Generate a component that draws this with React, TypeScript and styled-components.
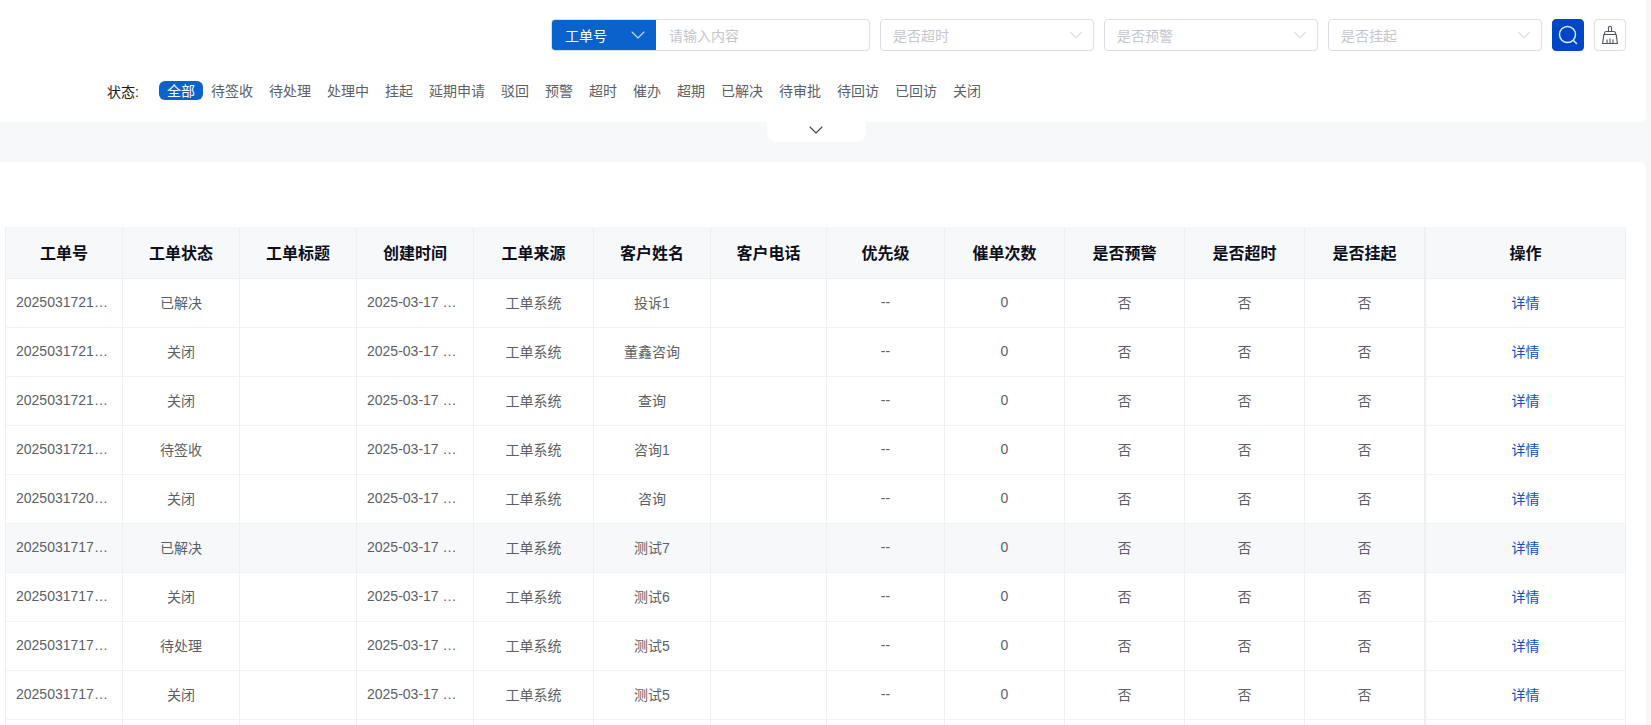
import styled, { createGlobalStyle } from "styled-components";
import { ChevronDown } from "lucide-react";

const GlobalStyle = createGlobalStyle`
    html, body {
        margin: 0;
        padding: 0;
        height: 725px;
        overflow: hidden;
        background: #f7f8fa;
        font-family: "Liberation Sans", "Noto Sans CJK SC", sans-serif;
        font-size: 14px;
    }
    * {
        box-sizing: border-box;
    }
`;

const Page = styled.div`
    height: 725px;
    padding-right: 5px;
    overflow: hidden;
`;

const FilterPanel = styled.section`
    height: 122px;
    padding: 19px 20px 0 107px;
    background: #fff;
    border-bottom-right-radius: 6px;
`;

const SearchBar = styled.div`
    display: flex;
    justify-content: flex-end;
    gap: 10px;
    height: 32px;
`;

const InputGroup = styled.div`
    display: flex;
    width: 319px;
    border: 1px solid #dcdee6;
    border-radius: 4px;
    overflow: hidden;
`;

const Prefix = styled.div`
    display: flex;
    align-items: center;
    justify-content: space-between;
    width: 104px;
    padding: 0 6px 0 13px;
    background: #0a62cc;
    color: #fff;
    svg {
        color: #c9d8f0;
    }
`;

const TextField = styled.div`
    flex: 1;
    display: flex;
    align-items: center;
    padding-left: 13px;
    color: #c4c6cc;
`;

const SelectBox = styled.div`
    display: flex;
    align-items: center;
    justify-content: space-between;
    width: 214px;
    padding: 0 6px 0 12px;
    border: 1px solid #dcdee6;
    border-radius: 4px;
    color: #c4c6cc;
    svg {
        color: #cfd2da;
    }
`;

const IconButton = styled.button<{ $primary?: boolean }>`
    display: flex;
    align-items: center;
    justify-content: center;
    width: 32px;
    height: 32px;
    padding: 0;
    border: 1px solid ${(p) => (p.$primary ? "#0047c8" : "#dcdee6")};
    border-radius: 4px;
    background: ${(p) => (p.$primary ? "#0047c8" : "#fff")};
`;

const StatusRow = styled.div`
    display: flex;
    align-items: center;
    height: 19px;
    margin-top: 30px;
`;

const StatusLabel = styled.span`
    width: 52px;
    color: #16181f;
`;

const StatusTab = styled.span<{ $active?: boolean }>`
    height: 19px;
    padding: 0 8px;
    line-height: 21px;
    border-radius: 6px;
    color: ${(p) => (p.$active ? "#fff" : "#5c5f66")};
    background: ${(p) => (p.$active ? "#0a62cc" : "transparent")};
`;

const Band = styled.div`
    height: 40px;
    padding-left: 767px;
`;

const Toggle = styled.div`
    display: flex;
    align-items: center;
    justify-content: center;
    width: 99px;
    height: 20px;
    padding: 0 2px 4px 0;
    background: #fff;
    border-radius: 0 0 10px 10px;
    color: #3f4552;
`;

const TablePanel = styled.section`
    height: 563px;
    padding: 65px 20px 0 5px;
    background: #fff;
    border-top-right-radius: 6px;
`;

const Table = styled.table`
    width: 1621px;
    table-layout: fixed;
    border-collapse: separate;
    border-spacing: 0;
`;

const HeadCell = styled.th<{ $fixed?: boolean }>`
    height: 52px;
    padding: 0 10px 1px;
    background: #f7f8fa;
    color: #0d0f1a;
    font-size: 16px;
    font-weight: 700;
    text-align: center;
    border-left: ${(p) => (p.$fixed ? "2px" : "1px")} solid #edeff5;
    border-bottom: 1px solid #edeff5;
    &:last-child {
        border-right: 1px solid #edeff5;
    }
`;

const Row = styled.tr<{ $hover?: boolean }>`
    background: ${(p) => (p.$hover ? "#f7f8fa" : "#fff")};
`;

const Cell = styled.td<{ $fixed?: boolean }>`
    height: 49px;
    padding: 0 10px 2px;
    color: #5c5f66;
    text-align: center;
    white-space: nowrap;
    overflow: hidden;
    text-overflow: ellipsis;
    border-left: ${(p) => (p.$fixed ? "2px" : "1px")} solid #edeff5;
    border-bottom: 1px solid #f1f2f7;
    &:last-child {
        border-right: 1px solid #edeff5;
    }
`;

const DetailLink = styled.a`
    color: #0b52cc;
    text-decoration: none;
`;

const tabs = ["待签收", "待处理", "处理中", "挂起", "延期申请", "驳回", "预警", "超时", "催办", "超期", "已解决", "待审批", "待回访", "已回访", "关闭"];
const columns = ["工单号", "工单状态", "工单标题", "创建时间", "工单来源", "客户姓名", "客户电话", "优先级", "催单次数", "是否预警", "是否超时", "是否挂起", "操作"];
const widths = [117, 117, 117, 117, 120, 117, 116, 118, 120, 120, 120, 120, 202];

const rows = [
    { id: "20250317213015", status: "已解决", name: "投诉1" },
    { id: "20250317212840", status: "关闭", name: "董鑫咨询" },
    { id: "20250317212633", status: "关闭", name: "查询" },
    { id: "20250317210952", status: "待签收", name: "咨询1" },
    { id: "20250317205021", status: "关闭", name: "咨询" },
    { id: "20250317174412", status: "已解决", name: "测试7" },
    { id: "20250317173850", status: "关闭", name: "测试6" },
    { id: "20250317173126", status: "待处理", name: "测试5" },
    { id: "20250317172703", status: "关闭", name: "测试5" },
];

function Chevron({ size = 24 }: { size?: number }) {
    return <ChevronDown size={size} strokeWidth={1.1} />;
}

function SearchIcon() {
    return (
        <svg width="22" height="22" viewBox="0 0 22 22" fill="none" stroke="#dfeaff" strokeWidth="1.5">
            <circle cx="10.5" cy="10.5" r="8" />
            <path d="M16.5 16.5 L19.5 19.5" strokeLinecap="round" />
        </svg>
    );
}

function BroomIcon() {
    return (
        <svg width="18" height="20" viewBox="0 0 18 20" fill="none" stroke="#4f5560" strokeWidth="1.1">
            <path d="M7.5 6.5 V2.2 C7.5 0.9 10.5 0.9 10.5 2.2 V6.5" />
            <path d="M3.5 9.5 V8.2 C3.5 7 4.5 6.5 5.5 6.5 H12.5 C13.5 6.5 14.5 7 14.5 8.2 V9.5" />
            <path d="M2.8 9.5 H15.2 L16.4 18.5 H1.6 Z" />
            <path d="M6 18.5 V14.5 M9 18.5 V13.5 M12 18.5 V14.5" />
        </svg>
    );
}

export default function App() {
    return (
        <>
            <GlobalStyle />
            <Page>
                <FilterPanel>
                    <SearchBar>
                        <InputGroup>
                            <Prefix>
                                工单号
                                <Chevron />
                            </Prefix>
                            <TextField>请输入内容</TextField>
                        </InputGroup>
                        <SelectBox>
                            是否超时
                            <Chevron size={22} />
                        </SelectBox>
                        <SelectBox>
                            是否预警
                            <Chevron size={22} />
                        </SelectBox>
                        <SelectBox>
                            是否挂起
                            <Chevron size={22} />
                        </SelectBox>
                        <IconButton $primary>
                            <SearchIcon />
                        </IconButton>
                        <IconButton>
                            <BroomIcon />
                        </IconButton>
                    </SearchBar>
                    <StatusRow>
                        <StatusLabel>状态:</StatusLabel>
                        <StatusTab $active>全部</StatusTab>
                        {tabs.map((tab) => (
                            <StatusTab key={tab}>{tab}</StatusTab>
                        ))}
                    </StatusRow>
                </FilterPanel>
                <Band>
                    <Toggle>
                        <Chevron />
                    </Toggle>
                </Band>
                <TablePanel>
                    <Table>
                        <colgroup>
                            {widths.map((w, i) => (
                                <col key={i} style={{ width: w }} />
                            ))}
                        </colgroup>
                        <thead>
                            <tr>
                                {columns.map((col) => (
                                    <HeadCell key={col} $fixed={col === "操作"}>
                                        {col}
                                    </HeadCell>
                                ))}
                            </tr>
                        </thead>
                        <tbody>
                            {rows.map((row, i) => (
                                <Row key={i} $hover={i === 5}>
                                    <Cell>{row.id}</Cell>
                                    <Cell>{row.status}</Cell>
                                    <Cell />
                                    <Cell>2025-03-17 21:30:15</Cell>
                                    <Cell>工单系统</Cell>
                                    <Cell>{row.name}</Cell>
                                    <Cell />
                                    <Cell>--</Cell>
                                    <Cell>0</Cell>
                                    <Cell>否</Cell>
                                    <Cell>否</Cell>
                                    <Cell>否</Cell>
                                    <Cell $fixed>
                                        <DetailLink>详情</DetailLink>
                                    </Cell>
                                </Row>
                            ))}
                            <Row>
                                {columns.map((col) => (
                                    <Cell key={col} $fixed={col === "操作"} />
                                ))}
                            </Row>
                        </tbody>
                    </Table>
                </TablePanel>
            </Page>
        </>
    );
}
